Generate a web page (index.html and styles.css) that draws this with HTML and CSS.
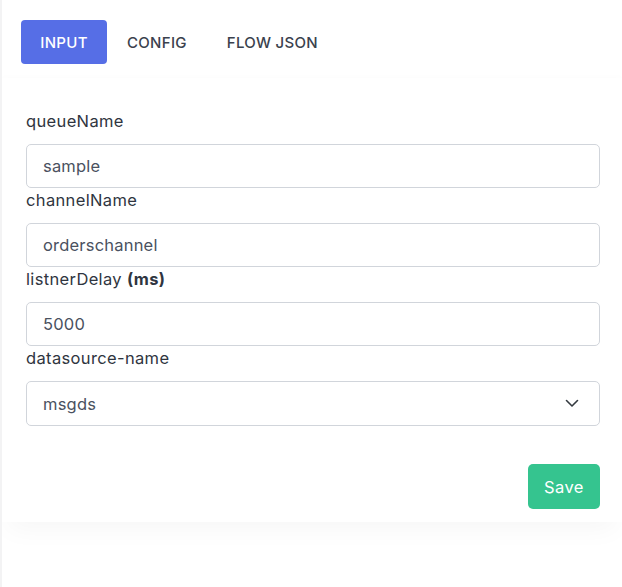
FILE: index.html
```html
<!DOCTYPE html>
<html>
<head>
<meta charset="utf-8">
<link rel="stylesheet" href="styles.css">
</head>
<body>
<div class="page">
  <nav class="tabs">
    <button class="tab active">INPUT</button>
    <button class="tab">CONFIG</button>
    <button class="tab">FLOW JSON</button>
  </nav>
  <section class="card">
    <div class="field">
      <label class="label">queueName</label>
      <div class="input">sample</div>
    </div>
    <div class="field">
      <label class="label">channelName</label>
      <div class="input">orderschannel</div>
    </div>
    <div class="field">
      <label class="label">listnerDelay <b>(ms)</b></label>
      <div class="input">5000</div>
    </div>
    <div class="field">
      <label class="label">datasource-name</label>
      <div class="input select"><span>msgds</span>
        <svg class="chev" width="14" height="9" viewBox="0 0 14 9"><path d="M1.5 1.5 L7 7 L12.5 1.5" fill="none" stroke="#343a40" stroke-width="1.6" stroke-linecap="round" stroke-linejoin="round"/></svg>
      </div>
    </div>
    <div class="actions">
      <button class="save">Save</button>
    </div>
  </section>
</div>
</body>
</html>
```
FILE: styles.css
```css
html, body { margin: 0; padding: 0; background: #fff; }
body {
  font-family: "Inter", "Open Sans", sans-serif;
  color: #3f4652;
  border-left: 2px solid #f3f3f4;
  min-height: 587px;
  box-sizing: border-box;
}
.page { width: 620px; }
.tabs {
  display: flex;
  padding: 20px 0 0 19px;
  height: 58px;
  box-sizing: border-box;
}
.tab {
  font-family: inherit;
  font-size: 15px;
  font-weight: 500;
  color: #3a414d;
  background: none;
  border: none;
  height: 44px;
  padding: 0 20px;
  border-radius: 4px;
  letter-spacing: 0.3px;
  cursor: pointer;
}
.tab.active { background: #566ee6; color: #fff; width: 86px; padding: 0; }
.card {
  background: #fff;
  margin-top: 20px;
  padding: 32px 22px 12px 24px;
  box-shadow: 0 14px 24px -6px rgba(0,0,0,0.035), 0 -2px 6px rgba(0,0,0,0.012);
  height: 444px;
  box-sizing: border-box;
  display: flex;
  flex-direction: column;
  gap: 1px;
}
.field { display: flex; flex-direction: column; }
.label {
  font-size: 16.5px;
  font-weight: 400;
  line-height: 22px;
  margin-bottom: 12px;
  color: #2f3540;
  letter-spacing: 0.35px;
}
.label b { font-weight: 700; }
.input {
  height: 44px;
  box-sizing: border-box;
  border: 1px solid #d1d5db;
  border-radius: 5px;
  padding: 0 16px;
  display: flex;
  align-items: center;
  font-size: 16.5px;
  color: #4a5160;
  letter-spacing: 0.2px;
}
.select { justify-content: space-between; height: 45px; padding-right: 20px; }
.chev { display: block; }
.actions { display: flex; justify-content: flex-end; margin-top: 37px; }
.save {
  font-family: inherit;
  font-size: 16.5px;
  font-weight: 400;
  color: #fff;
  background: #35c48f;
  border: none;
  border-radius: 5px;
  width: 72px;
  height: 45px;
  letter-spacing: 0.4px;
}
```
